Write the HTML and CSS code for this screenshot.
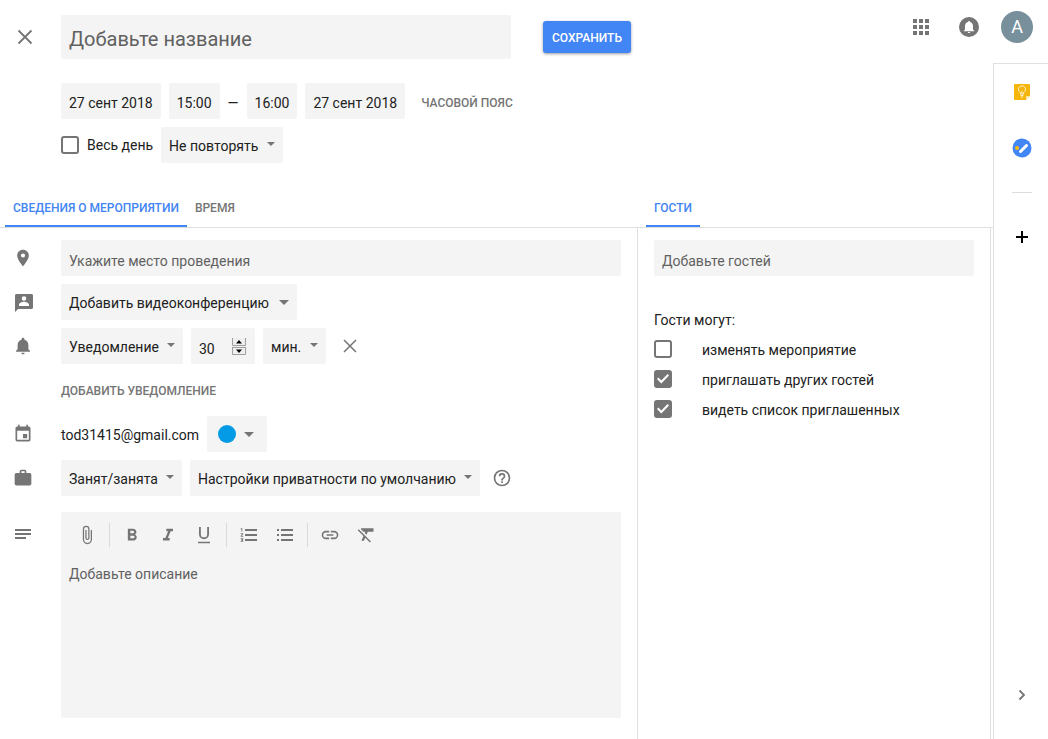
FILE: index.html
```html
<!DOCTYPE html>
<html lang="ru">
<head>
<meta charset="utf-8">
<title>Новое мероприятие</title>
<meta name="viewport" content="width=device-width, initial-scale=1">
<link rel="stylesheet" href="styles.css">
</head>
<body>
<div class="app">
  <header class="header">
    <button class="icon-btn close-btn" type="button" aria-label="Закрыть">
      <svg width="16" height="16" viewBox="0 0 16 16"><path d="M1.500 1.500l13 13M14.500 1.500l-13 13" stroke="currentColor" stroke-width="1.800" fill="none"/></svg>
    </button>
    <input class="title-input" type="text" placeholder="Добавьте название" aria-label="Название">
    <button class="save-btn" type="button">Сохранить</button>
    <nav class="account">
      <button class="icon-btn" type="button" aria-label="Приложения">
        <svg width="24" height="24" viewBox="0 0 24 24"><path fill="currentColor" d="M4 4h4v4H4zM10 4h4v4h-4zM16 4h4v4h-4zM4 10h4v4H4zM10 10h4v4h-4zM16 10h4v4h-4zM4 16h4v4H4zM10 16h4v4h-4zM16 16h4v4h-4z"/></svg>
      </button>
      <button class="icon-btn" type="button" aria-label="Оповещения">
        <svg width="20" height="20" viewBox="0 0 20 20"><circle cx="10" cy="10" r="10" fill="currentColor"/><path fill="#fff" d="M10 4c.6 0 1 .4 1 .9 1.900.5 3 2.100 3 4.100v3.500l1.200 1.200v.6H4.800v-.6L6 12.500V9c0-2 1.100-3.600 3-4.100 0-.5.4-.9 1-.9zM8.800 15h2.400c0 .7-.5 1.100-1.200 1.100S8.800 15.700 8.800 15z"/></svg>
      </button>
      <button class="avatar" type="button" aria-label="Аккаунт">A</button>
    </nav>
  </header>

  <main class="main">
    <form class="when">
      <div class="row">
        <button class="chip" type="button">27 сент 2018</button>
        <button class="chip" type="button">15:00</button>
        <span class="dash">—</span>
        <button class="chip" type="button">16:00</button>
        <button class="chip" type="button">27 сент 2018</button>
        <button class="text-btn zone-btn" type="button">Часовой пояс</button>
      </div>
      <div class="row">
        <label class="all-day"><input class="check" type="checkbox"><span>Весь день</span></label>
        <span class="select"><select aria-label="Повторение"><option>Не повторять</option></select></span>
      </div>
    </form>

    <div class="columns">
      <section class="column">
        <div class="tabs" role="tablist">
          <button class="tab tab-active" type="button" role="tab" aria-selected="true">Сведения о мероприятии</button>
          <button class="tab" type="button" role="tab" aria-selected="false">Время</button>
        </div>
        <form class="details">
          <div class="row">
            <svg class="row-icon" viewBox="0 0 24 24"><path d="M12 2C8.100 2 5 5.100 5 9c0 5.200 7 13 7 13s7-7.800 7-13c0-3.900-3.100-7-7-7zm0 9.500a2.500 2.500 0 1 1 0-5 2.500 2.500 0 0 1 0 5z"/></svg>
            <input class="field grow" type="text" placeholder="Укажите место проведения" aria-label="Место">
          </div>
          <div class="row">
            <svg class="row-icon" viewBox="0 0 20 20"><path fill-rule="evenodd" d="M3.500 2h15c.8 0 1.500.7 1.500 1.500v12c0 .8-.7 1.500-1.500 1.500H5l-3 3V3.500C2 2.700 2.700 2 3.500 2zM11 4.200a2.300 2.300 0 1 0 0 4.600 2.300 2.300 0 0 0 0-4.600zM6 14h10v-1.200c0-2-3.400-3-5-3s-5 1-5 3z"/></svg>
            <span class="select select-wide"><select aria-label="Видеоконференция"><option>Добавить видеоконференцию</option></select></span>
          </div>
          <div class="row">
            <svg class="row-icon" viewBox="0 0 24 24"><path d="M12 22c1.100 0 2-.9 2-2h-4c0 1.100.9 2 2 2zm6.500-6v-5c0-3.200-1.700-5.700-4.700-6.400V4c0-1-.8-1.800-1.800-1.800s-1.800.8-1.800 1.800v.6C7.200 5.300 5.500 7.800 5.500 11v5l-2 2v1h17v-1z"/></svg>
            <span class="select"><select aria-label="Тип уведомления"><option>Уведомление</option></select></span>
            <span class="stepper">
              <input class="field" type="number" value="30" aria-label="Количество">
              <svg class="stepper-arrows" width="15" height="17" viewBox="0 0 15 17"><path fill="#efefef" d="M0 0h15v17H0z"/><path fill="none" stroke="#a0a0a0" d="M.5 0v7.500h13V0M.5 9v7.500h13V9M.5 9.500h13"/><path fill="#000" d="M4 5.500L7 2l3 3.500zM4 11.500h6L7 15z"/></svg>
            </span>
            <span class="select"><select aria-label="Единицы"><option>мин.</option></select></span>
            <button class="icon-btn" type="button" aria-label="Удалить уведомление">
              <svg width="14" height="14" viewBox="0 0 14 14"><path d="M1 1l12 12M13 1L1 13" stroke="currentColor" stroke-width="1.500" fill="none"/></svg>
            </button>
          </div>
          <div class="row row-indent">
            <button class="text-btn" type="button">Добавить уведомление</button>
          </div>
          <div class="row">
            <svg class="row-icon" viewBox="0 0 24 24"><path d="M17 12h-5v5h5v-5zM16 1v2H8V1H6v2H5c-1.100 0-2 .9-2 2v14a2 2 0 0 0 2 2h14c1.100 0 2-.9 2-2V5c0-1.100-.9-2-2-2h-1V1h-2zm3 18H5V8h14v11z"/></svg>
            <span class="email">tod31415@gmail.com</span>
            <button class="chip color-btn" type="button" aria-label="Цвет мероприятия"><span class="dot"></span><span class="caret"></span></button>
          </div>
          <div class="row">
            <svg class="row-icon" viewBox="0 0 24 24"><path fill-rule="evenodd" d="M10 2h4a2 2 0 0 1 2 2v2h4a2 2 0 0 1 2 2v11a2 2 0 0 1-2 2H4a2 2 0 0 1-2-2V8a2 2 0 0 1 2-2h4V4a2 2 0 0 1 2-2zm0 4h4V4h-4z"/></svg>
            <span class="select"><select aria-label="Занятость"><option>Занят/занята</option></select></span>
            <span class="select"><select aria-label="Приватность"><option>Настройки приватности по умолчанию</option></select></span>
            <button class="icon-btn help-btn" type="button" aria-label="Справка">
              <svg width="20" height="20" viewBox="0 0 24 24"><path fill="currentColor" d="M11 18h2v-2h-2v2zm1-16a10 10 0 1 0 0 20 10 10 0 0 0 0-20zm0 18a8 8 0 1 1 0-16 8 8 0 0 1 0 16zm0-14a4 4 0 0 0-4 4h2a2 2 0 1 1 4 0c0 2-3 1.750-3 5h2c0-2.250 3-2.500 3-5a4 4 0 0 0-4-4z"/></svg>
            </button>
          </div>
          <div class="row row-top">
            <svg class="row-icon text-icon" viewBox="0 0 20 20"><path d="M2 5h16v2H2zM2 9h16v2H2zM2 13h11v2H2z"/></svg>
            <div class="editor">
              <div class="toolbar">
                <button class="tool" type="button" aria-label="Вложить файл"><svg viewBox="0 0 24 24"><path d="M16.500 6v11.500a4 4 0 0 1-8 0V5a2.500 2.500 0 0 1 5 0v10.500a1 1 0 0 1-2 0V6H10v9.500a2.500 2.500 0 0 0 5 0V5a4 4 0 0 0-8 0v12.500a5.500 5.500 0 0 0 11 0V6h-1.500z"/></svg></button>
                <span class="sep"></span>
                <button class="tool" type="button" aria-label="Полужирный"><svg viewBox="0 0 24 24"><path d="M15.600 11.300c1-.7 1.700-1.800 1.700-2.800 0-2.300-1.800-4-4-4H7v14h7c2.100 0 3.700-1.700 3.700-3.800 0-1.500-.8-2.800-2.100-3.400zM10 7h3a1.500 1.500 0 0 1 0 3h-3V7zm3.500 9H10v-3h3.500a1.500 1.500 0 0 1 0 3z"/></svg></button>
                <button class="tool" type="button" aria-label="Курсив"><svg viewBox="0 0 24 24"><path d="M10 4.500v3h2.200l-3.400 8H6v3h8v-3h-2.200l3.400-8H18v-3z"/></svg></button>
                <button class="tool" type="button" aria-label="Подчеркнутый"><svg viewBox="0 0 24 24"><path d="M12 17a6 6 0 0 0 6-6V2.500h-2.200V11a3.800 3.800 0 0 1-7.600 0V2.500H6V11a6 6 0 0 0 6 6zm-7.200 3v2h14.400v-2z"/></svg></button>
                <span class="sep"></span>
                <button class="tool" type="button" aria-label="Нумерованный список"><svg viewBox="0 0 20 20"><path d="M1.700 14.200h1.600v.4h-.8v.8h.8v.4H1.700v.9h2.500v-3.400H1.700zM2.500 6.700h.8V3.300H1.700v.9h.8zM1.700 9.200h1.500L1.700 10.900v.8h2.500v-.9H2.700l1.500-1.700v-.8H1.700zM6 4h12v2H6zM6 9h12v2H6zM6 14h12v2H6z"/></svg></button>
                <button class="tool" type="button" aria-label="Маркированный список"><svg viewBox="0 0 20 20"><path d="M2 4h2v2H2zM2 9h2v2H2zM2 14h2v2H2zM6 4h12v2H6zM6 9h12v2H6zM6 14h12v2H6z"/></svg></button>
                <span class="sep"></span>
                <button class="tool" type="button" aria-label="Ссылка"><svg viewBox="0 0 24 24"><path d="M3.900 12A3.100 3.100 0 0 1 7 8.900h4V7H7a5 5 0 0 0 0 10h4v-1.900H7A3.100 3.100 0 0 1 3.900 12zM8 13h8v-2H8v2zm9-6h-4v1.900h4a3.100 3.100 0 0 1 0 6.200h-4V17h4a5 5 0 0 0 0-10z"/></svg></button>
                <button class="tool" type="button" aria-label="Удалить форматирование"><svg viewBox="0 0 24 24"><path d="M3.300 5L2 6.300l7 7L6.500 19h3l1.600-3.700 5.600 5.700 1.300-1.300L3.600 5.300 3.300 5zM6 4v1.200L8.800 8h2.400l-.7 1.700 2.100 2.100L14.200 8H21V4H6z"/></svg></button>
              </div>
              <textarea class="description" placeholder="Добавьте описание" aria-label="Описание"></textarea>
            </div>
          </div>
        </form>
      </section>

      <section class="column">
        <div class="tabs guest-tabs" role="tablist">
          <button class="tab tab-active" type="button" role="tab" aria-selected="true">Гости</button>
        </div>
        <form class="guests">
          <input class="field" type="text" placeholder="Добавьте гостей" aria-label="Гости">
          <fieldset class="permissions">
            <legend>Гости могут:</legend>
            <label><input class="check" type="checkbox"><span>изменять мероприятие</span></label>
            <label><input class="check" type="checkbox" checked><span>приглашать других гостей</span></label>
            <label><input class="check" type="checkbox" checked><span>видеть список приглашенных</span></label>
          </fieldset>
        </form>
      </section>
    </div>
  </main>

  <aside class="side">
    <button class="icon-btn" type="button" aria-label="Keep">
      <svg width="16" height="16" viewBox="0 0 16 16"><path fill="#f5b50d" d="M1 0h14a1 1 0 0 1 1 1v11l-4 4H1a1 1 0 0 1-1-1V1a1 1 0 0 1 1-1z"/><path fill="#fdebb5" d="M12 16v-3a1 1 0 0 1 1-1h3z"/><path fill="none" stroke="#fff3cf" d="M6.500 10V8.600a3.500 3.500 0 1 1 3 0V10zM6.500 11.500h3M7 13h2M8 9.500V7"/></svg>
    </button>
    <button class="icon-btn" type="button" aria-label="Tasks">
      <svg width="20" height="20" viewBox="0 0 20 20"><circle cx="10" cy="10" r="9.500" fill="#4285f4"/><path d="M8.500 13.500L14.500 7.500" stroke="#fff" stroke-width="3" stroke-linecap="round"/><circle cx="5" cy="10" r="2" fill="#fbbc05"/></svg>
    </button>
    <hr class="side-rule">
    <button class="icon-btn add-btn" type="button" aria-label="Установить дополнения">
      <svg width="12" height="12" viewBox="0 0 12 12"><path d="M5 0h2v5h5v2H7v5H5V7H0V5h5z" fill="currentColor"/></svg>
    </button>
    <button class="icon-btn collapse-btn" type="button" aria-label="Скрыть боковую панель">
      <svg width="8" height="12" viewBox="0 0 8 12"><path d="M1.500 1.500L6 6l-4.500 4.500" fill="none" stroke="currentColor" stroke-width="1.800"/></svg>
    </button>
  </aside>
</div>
</body>
</html>
```
FILE: styles.css
```css
* {
  box-sizing: border-box;
}

body {
  margin: 0;
  background: #fff;
  color: #212121;
  font: 14px/20px Roboto, "Liberation Sans", sans-serif;
}

button,
input,
select,
textarea {
  margin: 0;
  border: 0;
  font: inherit;
  color: inherit;
}

button {
  padding: 0;
  background: none;
  cursor: pointer;
}

svg {
  display: block;
}

::placeholder {
  color: #616161;
  opacity: 1;
}

.app {
  display: grid;
  grid-template-columns: minmax(0, 1fr) 55px;
  grid-template-rows: 63px 1fr;
  min-height: 100vh;
}

.icon-btn {
  display: flex;
  align-items: center;
  justify-content: center;
  flex: none;
  width: 32px;
  height: 32px;
  color: #757575;
}

/* Header */

.header {
  grid-column: 1 / -1;
  display: flex;
  align-items: center;
  padding: 11px 15px 0 9px;
}

.title-input {
  flex: 0 1 450px;
  min-width: 0;
  height: 44px;
  margin: 0 32px 0 20px;
  padding: 4px 8px 0;
  border-radius: 2px;
  background: #f4f4f4;
  font-size: 20px;
}

.save-btn {
  height: 32px;
  padding: 2px 9px 0;
  border-radius: 3px;
  background: #4285f4;
  box-shadow: 0 1px 3px rgba(0, 0, 0, 0.4);
  color: #fff;
  font-size: 12px;
  font-weight: 500;
  text-transform: uppercase;
}

.account {
  display: flex;
  align-self: flex-start;
  gap: 16px;
  margin-left: auto;
}

.avatar {
  width: 32px;
  height: 32px;
  border-radius: 50%;
  background: #78909c;
  color: #fff;
  font-size: 18px;
}

/* Shared controls */

.row {
  display: flex;
  align-items: center;
  gap: 8px;
  min-height: 36px;
}

.chip,
.field,
.select select {
  height: 36px;
  padding: 4px 8px 0;
  border-radius: 2px;
  background: #f4f4f4;
}

.field {
  padding-top: 6px;
}

.grow {
  flex: 1;
  min-width: 0;
}

.select {
  position: relative;
  display: block;
}

.select select {
  display: block;
  padding: 2px 24px 0 8px;
  appearance: none;
}

.select-wide select {
  padding-right: 28px;
}

.select::after,
.caret {
  border: solid transparent;
  border-width: 4px 4px 0;
  border-top-color: #757575;
}

.select::after {
  content: "";
  position: absolute;
  top: 15px;
  right: 8px;
  pointer-events: none;
}

.select-wide::after {
  top: 16px;
  border-width: 5px 5px 0;
}

.text-btn {
  color: #757575;
  font-size: 12px;
  font-weight: 500;
  text-transform: uppercase;
}

.check {
  flex: none;
  display: grid;
  place-items: center;
  width: 18px;
  height: 18px;
  border: 2px solid #757575;
  border-radius: 3px;
  background: #fff;
  appearance: none;
}

.check:checked {
  background: #757575;
}

.check:checked::after {
  content: "";
  width: 12px;
  height: 10px;
  background: #fff;
  clip-path: polygon(0 50%, 12% 36%, 36% 64%, 88% 0, 100% 14%, 36% 94%);
}

/* Date and time */

.when {
  display: grid;
  gap: 8px;
  padding: 20px 16px 0 61px;
}

.dash {
  padding-top: 4px;
}

.zone-btn {
  margin: 3px 0 0 8px;
}

.all-day {
  display: flex;
  align-items: center;
  gap: 8px;
}

/* Columns */

.main {
  display: flex;
  flex-direction: column;
  min-width: 0;
}

.columns {
  flex: 1;
  display: grid;
  grid-template-columns: minmax(0, 1fr) 355px;
  margin-top: 25px;
}

.column {
  display: flex;
  flex-direction: column;
}

.tabs {
  display: flex;
  height: 40px;
  padding-left: 5px;
  border-bottom: 1px solid #e0e0e0;
}

.guest-tabs {
  padding-left: 8px;
}

.tab {
  padding: 2px 8px 0;
  border-bottom: 2px solid transparent;
  color: #757575;
  font-size: 12px;
  font-weight: 500;
  text-transform: uppercase;
}

.tab-active {
  border-bottom-color: #4285f4;
  color: #4285f4;
}

.details {
  flex: 1;
  display: flex;
  flex-direction: column;
  gap: 8px;
  padding: 12px 16px 21px 13px;
  border-right: 1px solid #e0e0e0;
}

.row-icon {
  flex: none;
  width: 20px;
  height: 20px;
  margin-right: 20px;
  fill: #757575;
}

.row-indent {
  padding: 2px 0 0 48px;
}

.email {
  padding-top: 2px;
}

.stepper {
  position: relative;
}

.stepper .field {
  display: block;
  width: 64px;
  appearance: textfield;
}

.stepper .field::-webkit-inner-spin-button {
  appearance: none;
}

.stepper-arrows {
  position: absolute;
  top: 10px;
  right: 8px;
  pointer-events: none;
}

.color-btn {
  display: flex;
  align-items: center;
  gap: 8px;
  padding: 0 13px 0 11px;
}

.dot {
  width: 18px;
  height: 18px;
  border-radius: 50%;
  background: #039be5;
}

.caret {
  border-width: 5px 5px 0;
}

.help-btn {
  width: 28px;
}

.row-top {
  flex: 1;
  align-items: stretch;
  margin-top: 8px;
}

.text-icon {
  margin-top: 12px;
}

.editor {
  flex: 1;
  display: flex;
  flex-direction: column;
  min-width: 0;
  border-radius: 2px;
  background: #f4f4f4;
}

.toolbar {
  display: flex;
  align-items: center;
  height: 46px;
  padding: 0 8px;
}

.tool {
  display: grid;
  place-items: center;
  width: 36px;
  height: 36px;
}

.tool svg {
  width: 20px;
  height: 20px;
  fill: #757575;
}

.sep {
  width: 1px;
  height: 24px;
  margin: 0 4px;
  background: #dadada;
}

.description {
  flex: 1;
  min-height: 120px;
  padding: 6px 8px;
  background: none;
  resize: none;
}

/* Guests */

.guests {
  flex: 1;
  display: flex;
  flex-direction: column;
  margin-right: 2px;
  padding: 12px 16px;
  border-right: 1px solid #e0e0e0;
}

.permissions {
  display: grid;
  gap: 10px;
  margin: 34px 0 0;
  padding: 0;
  border: 0;
}

.permissions legend {
  margin-bottom: 10px;
  padding: 0;
}

.permissions label {
  display: flex;
  gap: 30px;
}

/* Side panel */

.side {
  display: flex;
  flex-direction: column;
  align-items: center;
  padding: 12px 0 28px 2px;
  border: solid #e0e0e0;
  border-width: 1px 0 0 1px;
}

.side .icon-btn + .icon-btn {
  margin-top: 24px;
}

.side-rule {
  width: 20px;
  height: 1px;
  margin: 28px 0;
  border: 0;
  background: #dadce0;
}

.add-btn {
  color: #000;
}

.side .add-btn + .collapse-btn {
  margin-top: auto;
}
```
